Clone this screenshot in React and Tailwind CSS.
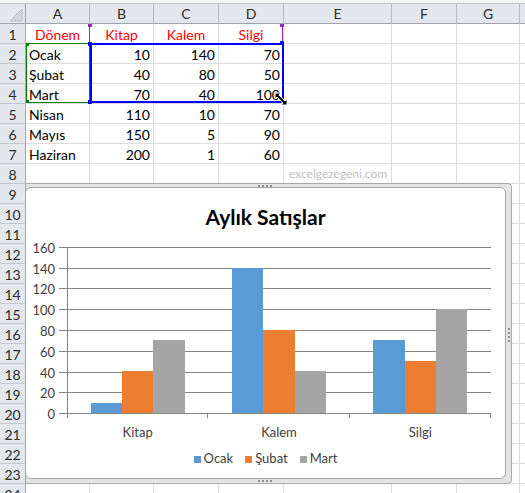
import React from "react";

const cols = [
  { name: "A", w: "w-[64px]" },
  { name: "B", w: "w-[64px]" },
  { name: "C", w: "w-[65px]" },
  { name: "D", w: "w-[65px]" },
  { name: "E", w: "w-[108px]" },
  { name: "F", w: "w-[65px]" },
  { name: "G", w: "w-[63px]" },
  { name: "", w: "w-[64px]" },
];

const table = [
  ["Dönem", "Kitap", "Kalem", "Silgi"],
  ["Ocak", 10, 140, 70],
  ["Şubat", 40, 80, 50],
  ["Mart", 70, 40, 100],
  ["Nisan", 110, 10, 70],
  ["Mayıs", 150, 5, 90],
  ["Haziran", 200, 1, 60],
];

const series = [
  { name: "Ocak", color: "#5b9bd5", box: "bg-[#5b9bd5]" },
  { name: "Şubat", color: "#ed7d31", box: "bg-[#ed7d31]" },
  { name: "Mart", color: "#a5a5a5", box: "bg-[#a5a5a5]" },
];

const categories = ["Kitap", "Kalem", "Silgi"];
const ticks = [0, 20, 40, 60, 80, 100, 120, 140, 160];

const Plot = () => {
  // svg origin sits at page (26, 238)
  const x0 = 41;
  const x1 = 465;
  const y0 = 175;
  const scale = (175 - 9) / 160;
  const catW = (x1 - x0) / 3;
  const barW = catW / 4.5;

  return (
    <svg width="479" height="210" className="block">
      {ticks.map((t) => {
        const y = Math.round(y0 - t * scale) + 0.5;
        return (
          <g key={t}>
            <line x1={33} x2={x1} y1={y} y2={y} stroke="#868686" />
            <text
              x={29}
              y={y}
              textAnchor="end"
              dominantBaseline="central"
              fontSize="13"
              fill="#404040"
            >
              {t}
            </text>
          </g>
        );
      })}

      {categories.map((cat, ci) =>
        series.map((s, si) => {
          const v = table[si + 1][ci + 1];
          const x = Math.round(x0 + catW * ci + barW * 0.75 + barW * si);
          const xe = Math.round(x0 + catW * ci + barW * 0.75 + barW * (si + 1));
          const h = Math.round(v * scale);
          return (
            <rect
              key={cat + s.name}
              x={x}
              y={y0 - h}
              width={xe - x}
              height={h}
              fill={s.color}
            />
          );
        }),
      )}

      {/* axes */}
      <line x1={41.5} x2={41.5} y1={9} y2={180} stroke="#868686" />
      <line x1={33} x2={x1} y1={175.5} y2={175.5} stroke="#868686" />
      {[1, 2, 3].map((i) => {
        const x = Math.round(x0 + catW * i) - 0.5;
        return <line key={i} x1={x} x2={x} y1={175} y2={180} stroke="#868686" />;
      })}

      {categories.map((cat, ci) => (
        <text
          key={cat}
          x={x0 + catW * ci + catW / 2}
          y={194}
          textAnchor="middle"
          dominantBaseline="central"
          fontSize="13"
          fill="#404040"
        >
          {cat}
        </text>
      ))}
    </svg>
  );
};

const Dots = ({ vertical }) => (
  <div className={`flex gap-[2px] ${vertical ? "flex-col" : "flex-row"}`}>
    {[0, 1, 2, 3].map((i) => (
      <span key={i} className="h-[2px] w-[2px] bg-[#8d8d8d]" />
    ))}
  </div>
);

const Chart = () => {
  return (
    <div className="absolute top-[183px] left-[19px] z-10 h-[301px] w-[493px] rounded-[4px] border border-[#a9a9a9] bg-[#e4e4e4] pt-[3px] pr-[5px] pb-[4px] pl-[5px]">
      {/* selection handles on the frame */}
      <div className="absolute top-[1px] left-[238px]">
        <Dots />
      </div>
      <div className="absolute bottom-[1px] left-[238px]">
        <Dots />
      </div>
      <div className="absolute top-[144px] right-[1px]">
        <Dots vertical />
      </div>

      <div className="flex h-full w-full flex-col rounded-[6px] border border-[#a3a3a3] bg-white">
        <div className="h-[50px] pt-[18px] text-center text-[21px] leading-none font-bold text-black">
          Aylık Satışlar
        </div>
        <Plot />
        <div className="flex h-[22px] items-center justify-center gap-[12px] text-[13px] text-[#404040]">
          {series.map((s) => (
            <div key={s.name} className="flex items-center gap-[3px]">
              <span className={`h-[7px] w-[7px] ${s.box}`} />
              <span>{s.name}</span>
            </div>
          ))}
        </div>
      </div>
    </div>
  );
};

const Cell = ({ r, ci, col }) => {
  let content = null;
  let align = "justify-start";
  let color = "text-black";

  const row = table[r - 1];
  if (row && ci < 4) {
    content = row[ci];
    if (r === 1) {
      align = "justify-center";
      color = "text-[#ff0000]";
    } else if (ci > 0) {
      align = "justify-end";
    }
  }

  return (
    <div
      className={`flex shrink-0 items-center border-r border-b border-[#dadcdd] px-[3px] pt-[1px] ${col.w} ${align} ${color}`}
    >
      {content}
      {r === 8 && ci === 4 && (
        <span className="pl-[2px] text-[12px] whitespace-nowrap text-[#c0c0c0]">
          excelgezegeni.com
        </span>
      )}
    </div>
  );
};

const App = () => {
  const rowNums = Array.from({ length: 24 }, (_, i) => i + 1);

  return (
    <div className="relative h-[493px] w-[525px] overflow-hidden bg-white font-['Lato',sans-serif] text-[14px]">
      {/* column headers */}
      <div className="flex h-[24px] bg-[#f4f5f7] pt-[3px]">
        <div className="relative h-[21px] w-[26px] shrink-0 border-t border-r border-b border-t-[#c2c6cb] border-r-[#9ea4ab] border-b-[#9ea4ab] bg-[#e4e7eb]">
          <svg className="absolute top-[4px] left-[9px]" width="14" height="14">
            <path d="M13 1 L13 13 L1 13 Z" fill="#d2d6db" stroke="#bcc1c7" />
          </svg>
        </div>
        {cols.map((c, i) => (
          <div
            key={i}
            className={`flex h-[21px] shrink-0 items-center justify-center border-t border-r border-b border-t-[#c2c6cb] border-r-[#b6bbc1] border-b-[#9ea4ab] bg-[#e4e7eb] text-[#2c2c2c] ${c.w}`}
          >
            {c.name}
          </div>
        ))}
      </div>

      {/* rows */}
      {rowNums.map((r) => (
        <div key={r} className="flex h-[20px]">
          <div className="relative z-20 flex w-[26px] shrink-0 items-center justify-center border-r border-b border-r-[#9ea4ab] border-b-[#c4c8cd] bg-[#e4e7eb] pt-[1px] text-[#2c2c2c]">
            {r}
          </div>
          {cols.map((c, ci) => (
            <Cell key={ci} r={r} ci={ci} col={c} />
          ))}
        </div>
      ))}

      {/* range finder: series names */}
      <div className="absolute top-[24px] left-[89px] z-30 h-[20px] w-[194px] border-r border-l border-[#9d24c9]">
        <span className="absolute top-0 -left-[2px] h-[3px] w-[4px] bg-[#9d24c9]" />
        <span className="absolute top-0 -right-[2px] h-[3px] w-[4px] bg-[#9d24c9]" />
      </div>

      {/* range finder: categories */}
      <div className="absolute top-[43px] left-[26px] z-30 h-[60px] w-[64px] border border-[#008000]">
        <span className="absolute -top-px -left-px h-[3px] w-[3px] bg-[#008000]" />
        <span className="absolute -bottom-px -left-px h-[3px] w-[3px] bg-[#008000]" />
      </div>

      {/* range finder: values */}
      <div className="absolute top-[43px] left-[90px] z-30 h-[60px] w-[194px] border-2 border-[#0000ff]">
        <span className="absolute -top-[3px] -left-[4px] h-[4px] w-[4px] bg-[#0000ff]" />
        <span className="absolute -top-[4px] -right-[2px] h-[4px] w-[4px] bg-[#0000ff]" />
        <span className="absolute -bottom-[3px] -left-[4px] h-[4px] w-[4px] bg-[#0000ff]" />
        {/* resize cursor */}
        <svg className="absolute -right-[7px] -bottom-[6px]" width="15" height="15" viewBox="0 0 15 15">
          <path
            d="M1 1 L7 1 L5 3 L11 9 L13 7 L13 13 L7 13 L9 11 L3 5 L1 7 Z"
            fill="#000"
            stroke="#fff"
            strokeWidth="1"
          />
        </svg>
      </div>

      <Chart />
    </div>
  );
};

export default App;
